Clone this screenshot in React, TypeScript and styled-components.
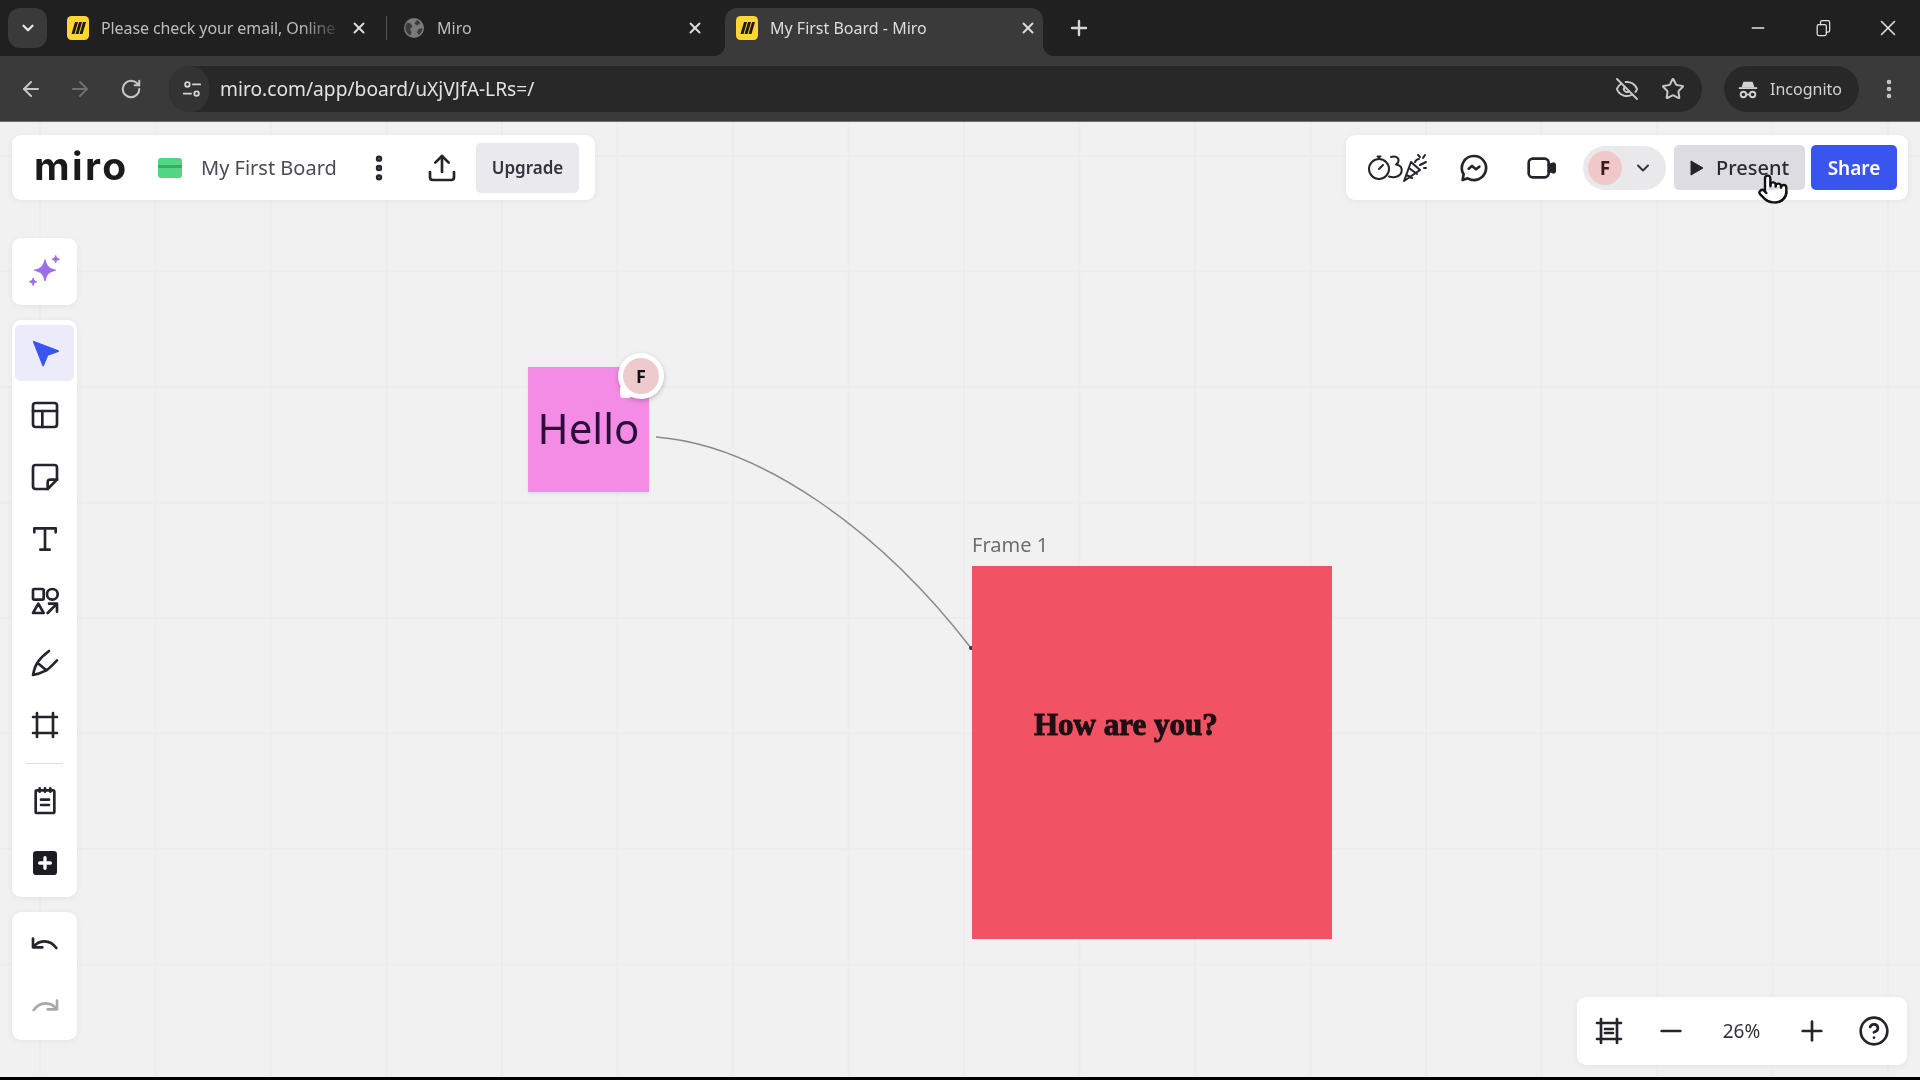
import React from "react";
import styled, { createGlobalStyle } from "styled-components";
import {
  ArrowLeft, ArrowRight, ChevronDown, CircleHelp, EllipsisVertical, EyeOff, Minus, Plus,
  Pointer, RotateCw, Star, Upload, X,
} from "lucide-react";

const Global = createGlobalStyle`
  html, body { margin: 0; padding: 0; height: 100%; overflow: hidden; background: #f1f1f1; }
  * { box-sizing: border-box; }
  #root { height: 100%; }
`;

const Page = styled.div`
  width: 1920px; height: 1080px; display: flex; flex-direction: column;
  font-family: "Noto Sans", "Open Sans", sans-serif;
  filter: blur(0.4px);
`;

/* ---------- browser chrome ---------- */
const TabStrip = styled.div`
  height: 56px; flex: none; background: #202020; display: flex; align-items: flex-end; padding-left: 8px; color: #c4c4c4;
`;
const TabSearch = styled.div`
  width: 39px; height: 40px; margin-bottom: 8px; border-radius: 12px; background: #3a3a3a; color: #e8e8e8;
  display: flex; align-items: center; justify-content: center;
`;
const Tab = styled.div<{ $active?: boolean; $left: number }>`
  position: relative; width: 318px; height: 48px; margin-left: ${(p) => p.$left}px; padding: 0 6px 8px 11px;
  display: flex; align-items: center; border-radius: 12px 12px 0 0;
  background: ${(p) => (p.$active ? "#3a3a3a" : "transparent")};
  color: ${(p) => (p.$active ? "#dedede" : "#bdbdbd")};
  ${(p) => p.$active && `
    &::before, &::after { content: ""; position: absolute; bottom: 0; width: 12px; height: 12px; }
    &::before { left: -12px; background: radial-gradient(circle at 0 0, transparent 12px, #3a3a3a 12.5px); }
    &::after { right: -12px; background: radial-gradient(circle at 100% 0, transparent 12px, #3a3a3a 12.5px); }
  `}
`;
const TabIconBox = styled.span`
  width: 22px; height: 24px; flex: none; display: flex; align-items: center; justify-content: center;
`;
const TabTitle = styled.span<{ $fade?: boolean }>`
  margin-left: 12px; width: 238px; flex: none; font-size: 16px; white-space: nowrap;
  ${(p) => p.$fade && "letter-spacing: -0.1px; mask-image: linear-gradient(to right, #000 84%, rgba(0,0,0,.2) 98%);"}
`;
const TabClose = styled.span`
  margin-left: auto; margin-right: -1px; width: 20px; height: 20px; display: flex; align-items: center; justify-content: center; color: #dcdcdc;
`;
const TabSep = styled.span`
  width: 1px; height: 24px; margin: 0 5px 16px 12px; background: #555;
`;
const NewTab = styled.span`
  width: 32px; height: 32px; margin: 0 0 12px 20px; display: flex; align-items: center; justify-content: center; color: #d6d6d6;
`;
const WindowControls = styled.div`
  margin-left: auto; height: 56px; display: flex;
`;
const WindowButton = styled.span`
  width: 65px; height: 56px; display: flex; align-items: center; justify-content: center; color: #e2e2e2;
`;
const Toolbar = styled.div`
  height: 66px; flex: none; background: #3a3a3a; display: flex; align-items: center; color: #c7c7c7; border-bottom: 1px solid #6d6d6d;
`;
const NavButton = styled.span<{ $w: number; $dim?: boolean }>`
  width: ${(p) => p.$w}px; display: flex; justify-content: center; color: ${(p) => (p.$dim ? "#6f6f6f" : "#c7c7c7")};
`;
const AddressBar = styled.div`
  margin-left: 5px; width: 1533px; height: 46px; border-radius: 23px; background: #282828; display: flex; align-items: center;
`;
const SiteChip = styled.span`
  width: 40px; height: 46px; border-radius: 23px; background: #333; display: flex; align-items: center; justify-content: center; padding-left: 6px; color: #d4d4d4;
`;
const Url = styled.span`
  margin-left: 11px; font-size: 19.2px; color: #e2e2e2; white-space: nowrap;
`;
const BarIcons = styled.span`
  margin-left: auto; display: flex; align-items: center; gap: 22px; padding-right: 17px; color: #c7c7c7;
`;
const IncognitoPill = styled.div`
  margin-left: 22px; width: 135px; height: 46px; border-radius: 23px; background: #282828; display: flex; align-items: center; padding-left: 13px; gap: 11px; color: #d2d2d2; font-size: 16px;
`;
const ToolbarKebab = styled.span`
  margin-left: 18px; display: flex; color: #c7c7c7;
`;

/* ---------- board ---------- */
const Canvas = styled.main`
  position: relative; flex: 1; overflow: hidden; background-color: #f1f1f1;
  background-image:
    linear-gradient(to right, #ededed 2px, transparent 2px),
    linear-gradient(to bottom, #ededed 2px, transparent 2px);
  background-size: 115.5px 115.5px;
  background-position: 39px 33px;
  &::after { content: ""; position: absolute; left: 0; right: 0; bottom: 0; height: 3px; background: #000; }
`;
const Sticky = styled.div`
  position: absolute; left: 528px; top: 245px; width: 121px; height: 125px; background: #f48ce6;
  box-shadow: 0 2px 3px rgba(0,0,0,.08);
  display: flex; align-items: center; justify-content: center; padding-bottom: 4px;
  font-size: 42px; color: #2c0e3d;
`;
const AvatarBubble = styled.div`
  position: absolute; left: 618px; top: 231px; width: 46px; height: 46px; border-radius: 50%; background: #fff;
  box-shadow: 0 2px 5px rgba(0,0,0,.22); display: flex; align-items: center; justify-content: center;
  &::before { content: ""; position: absolute; left: 2px; bottom: 1px; width: 12px; height: 12px; background: #fff; border-radius: 3px 0 4px 4px; }
`;
const AvatarFace = styled.span`
  position: relative; width: 36px; height: 36px; border-radius: 50%; background: #eccace; color: #111;
  display: flex; align-items: center; justify-content: center; font-size: 18px; font-weight: 700;
`;
const Connector = styled.svg`
  position: absolute; left: 0; top: 0; width: 1920px; height: 958px; pointer-events: none;
`;
const FrameLabel = styled.div`
  position: absolute; left: 972px; top: 409px; font-size: 20px; line-height: 27px; color: #6e6e6e;
`;
const Frame = styled.div`
  position: absolute; left: 972px; top: 444px; width: 360px; height: 373px; background: #f15365;
`;
const FrameText = styled.div`
  position: absolute; left: 62px; top: 137px; font-family: "Liberation Serif", serif; font-weight: 700; font-size: 31px; line-height: 44px; color: #1d1014; white-space: nowrap; -webkit-text-stroke: 1px #1d1014;
`;

const Overlay = styled.div`
  position: absolute; inset: 0; padding: 13px 12px 0 12px; display: flex; flex-direction: column; pointer-events: none;
`;
const TopRow = styled.div`
  display: flex; justify-content: space-between;
`;
const Panel = styled.div`
  background: #fff; border-radius: 9px; box-shadow: 0 1px 6px rgba(0,0,0,.06);
`;
const BoardPanel = styled(Panel)`
  width: 583px; height: 65px; display: flex; align-items: center; padding-left: 22px;
`;
const Logo = styled.span`
  width: 92px; font-family: Inter, sans-serif; font-weight: 700; font-size: 39px; line-height: 1; color: #1a1a1a; letter-spacing: 2.4px; margin-top: -5px;
`;
const BoardIcon = styled.span`
  margin-left: 32px; width: 24px; height: 20px; border-radius: 3px; background: #52d585; display: flex; flex-direction: column; justify-content: center;
  &::after { content: ""; display: block; height: 3px; background: #39ad66; margin-bottom: 3px; }
`;
const BoardName = styled.span`
  margin-left: 19px; width: 136px; font-size: 20px; color: #4a4a55; white-space: nowrap;
`;
const IconButton = styled.span<{ $w?: number; $ml?: number }>`
  width: ${(p) => p.$w ?? 40}px; margin-left: ${(p) => p.$ml ?? 0}px; flex: none; display: flex; align-items: center; justify-content: center; color: #24242c;
`;
const Upgrade = styled.span`
  margin-left: 14px; width: 103px; height: 50px; border-radius: 5px; background: #e9e9ee; color: #33333f; font-size: 17px; font-weight: 600; padding-bottom: 1px;
  display: flex; align-items: center; justify-content: center;
`;
const ActionsPanel = styled(Panel)`
  width: 562px; height: 65px; display: flex; align-items: center; padding-left: 22px;
`;
const AvatarPill = styled.div`
  margin-left: 25px; width: 83px; height: 44px; border-radius: 22px; background: #e9e9ec; display: flex; align-items: center; padding-left: 5px; color: #33333f;
`;
const PillFace = styled.span`
  width: 34px; height: 34px; border-radius: 50%; background: #f0c8ca; color: #3c1b20; font-size: 19px; font-weight: 700;
  display: flex; align-items: center; justify-content: center; margin-right: 11px;
`;
const Present = styled.div`
  margin-left: 8px; width: 131px; height: 45px; border-radius: 5px; background: #dcdce2; color: #2a2a33; font-size: 20px; font-weight: 500;
  display: flex; align-items: center; padding-left: 16px; gap: 12px;
`;
const Share = styled.div`
  margin-left: 6px; width: 86px; height: 45px; border-radius: 5px; background: #3a55ee; color: #fff; font-size: 19px; font-weight: 600;
  display: flex; align-items: center; justify-content: center;
`;
const Cursor = styled.span`
  position: absolute; left: 1757px; top: 51px; display: flex; color: #111;
`;
const Rail = styled.div`
  margin-top: 38px; width: 65px; display: flex; flex-direction: column; gap: 15px;
`;
const MagicPanel = styled(Panel)`
  height: 67px; display: flex; align-items: center; justify-content: center;
`;
const ToolsPanel = styled(Panel)`
  padding: 5px 3px 6px; display: flex; flex-direction: column; gap: 6px;
`;
const HistoryPanel = styled(Panel)`
  padding: 4px 3px 6px; display: flex; flex-direction: column; gap: 6px;
`;
const Tool = styled.span<{ $active?: boolean; $muted?: boolean }>`
  height: 56px; border-radius: 5px; display: flex; align-items: center; justify-content: center;
  background: ${(p) => (p.$active ? "#ebebfa" : "transparent")};
  color: ${(p) => (p.$muted ? "#a9a9a9" : "#24242c")};
`;
const RailDivider = styled.span`
  height: 1px; margin: 3.5px 11px; background: #dedee2;
`;
const ZoomPanel = styled(Panel)`
  position: absolute; right: 13px; bottom: 15px; width: 330px; height: 68px; padding-left: 1px; display: flex; align-items: center;
`;
const ZoomValue = styled.span`
  width: 79px; text-align: center; font-size: 19px; color: #33333b;
`;

/* ---------- drawn icons ---------- */
const Stroke = styled.svg.attrs({ fill: "none", stroke: "currentColor", strokeLinecap: "round", strokeLinejoin: "round" })``;

const I = ({ children, size = 32, sw = 2 }: { children: React.ReactNode; size?: number; sw?: number }) => (
  <Stroke width={size} height={size} viewBox="0 0 24 24" strokeWidth={sw}>{children}</Stroke>
);

const MiroFavicon = () => (
  <svg width="22" height="24" viewBox="0 0 22 24">
    <rect x="0" y="0" width="22" height="24" rx="4.5" fill="#ffd633" />
    <path d="M8 6h3L7.5 18H4.5zM12 6h3l-3.5 12H8.5zM16 6h3l-3.5 12h-3z" fill="#1e1a10" />
  </svg>
);
const GlobeIcon = () => (
  <svg width="20" height="20" viewBox="0 0 20 20">
    <circle cx="10" cy="10" r="10" fill="#7b7b7b" />
    <path d="M3 4.5l3.5 1 2 3-2.5 2.5 1.5 3-1 3.5C3 16 .8 12 1.5 8zM13 2c2 .8 3 2 3 3.5l-3 2-2.5-2zM18.5 10c0 3-2 6-4 7l-1.5-3 1.5-3z" fill="#3b3b3b" />
  </svg>
);
const RestoreIcon = () => (
  <I size={20} sw={1.5}><rect x="5" y="8" width="11" height="13" rx="2" /><path d="M9 8V5a2 2 0 0 1 2-2h7a2 2 0 0 1 2 2v10a2 2 0 0 1-2 2h-2" /></I>
);
const TuneIcon = () => (
  <I size={22} sw={2}><circle cx="7" cy="7" r="2.5" /><path d="M13 7h8M3 17h8" /><circle cx="17" cy="17" r="2.5" /></I>
);
const IncognitoIcon = () => (
  <svg width="22" height="22" viewBox="0 0 24 24" fill="none" stroke="currentColor" strokeWidth="2">
    <path d="M7 4h10l2 6H5z" fill="currentColor" stroke="none" />
    <path d="M2 11h20" />
    <circle cx="7" cy="18" r="3" /><circle cx="17" cy="18" r="3" /><path d="M10 18h4" />
  </svg>
);
const Sparkles = () => (
  <svg width="38" height="38" viewBox="0 0 32 32" fill="#9a6fe9" stroke="#9a6fe9" strokeWidth="0.8" strokeLinejoin="round">
    <path d="M16 5.500c1.500 5.800 3.200 7.500 9 9-5.800 1.500-7.500 3.200-9 9-1.500-5.800-3.200-7.500-9-9 5.800-1.500 7.500-3.200 9-9z" />
    <path d="M25 2c.5 2 1.200 2.700 3.200 3.200-2 .5-2.700 1.200-3.200 3.200-.5-2-1.200-2.700-3.200-3.200C23.800 4.700 24.500 4 25 2z" />
    <path d="M6 21c.5 2 1.200 2.700 3.200 3.200-2 .5-2.700 1.200-3.200 3.200-.5-2-1.200-2.700-3.200-3.200 2-.5 2.700-1.200 3.200-3.200z" />
  </svg>
);
const SelectIcon = () => (
  <svg width="30" height="30" viewBox="0 0 24 24" fill="#3a55f2" stroke="#3a55f2" strokeWidth="1.4" strokeLinejoin="round">
    <path d="M3 3l19.500 7.500-8.500 3-3.500 8.500z" />
  </svg>
);
const LayoutIcon = () => <I><rect x="3" y="3" width="18" height="18" rx="2" /><path d="M3 9h18M10 9v12" /></I>;
const StickyIcon = () => <I><path d="M5 3h14a2 2 0 0 1 2 2v9l-7 7H5a2 2 0 0 1-2-2V5a2 2 0 0 1 2-2z" /><path d="M21 14h-5a2 2 0 0 0-2 2v5" /></I>;
const TextIcon = () => <I><path d="M4 7V4h16v3M12 4v16M8.500 20h7" /></I>;
const ShapesIcon = () => <I><rect x="3" y="3" width="8" height="8" rx="1" /><circle cx="17.500" cy="7" r="4" /><path d="M7 14l4 7H3zM14 21l7-7M15 14h6v6" /></I>;
const PenIcon = () => <I><path d="M3 21c.8-4 2-7.500 3.500-9.500C8.500 8.500 11 6 15 3M3 21c3.500-.6 7-2 10-3.500 3-2 5-4.500 8-7.500M6.500 12l6.500 5.500" /></I>;
const FrameIcon = () => <I><path d="M6 3v18M18 3v18M3 6h18M3 18h18" /></I>;
const NotesIcon = () => <I><rect x="5" y="4" width="14" height="17" rx="1" /><path d="M8 2.500V5M12 2.500V5M16 2.500V5M9 11h6M9 15h6" /></I>;
const AddIcon = () => (
  <svg width="32" height="32" viewBox="0 0 24 24"><rect x="3" y="3" width="18" height="18" rx="2.500" fill="#1c1c22" /><path d="M12 8v8M8 12h8" stroke="#fff" strokeWidth="2.500" strokeLinecap="round" /></svg>
);
const UndoIcon = () => <I><path d="M3 8v6.500h7M3.500 14C7 9.500 15 7.500 20.500 15" /></I>;
const RedoIcon = () => <I><path d="M21 8v6.500h-7M20.500 14C17 9.500 9 7.500 3.500 15" /></I>;
const FitIcon = () => <I><path d="M6 3v18M18 3v18M3 6h18M3 18h18M9 10.500h6M9 13.500h6" /></I>;
const ReactionsIcon = () => (
  <Stroke width="60" height="30" viewBox="0 0 60 30" strokeWidth="2">
    <circle cx="11" cy="16" r="10" /><path d="M11 6V3.500M9.500 3.500h3M11 16l4-4" />
    <path d="M23 4c4.500-1.500 8 .5 7.500 4-.2 1.500-1 2.500-2.500 3.500 4.500.5 6.500 3.500 5.500 7.500-1 4-6.500 6.500-12.500 4.500" />
    <path d="M36 28l7-19 9 8zM38.500 22l5.500 3M41 15l8 6" />
    <path d="M47 9c1-2 2-3 4-3M52 12l6-3M50 2l2 2M57 2l-2 3M58 15h-2" />
  </Stroke>
);
const ChatIcon = () => (
  <I><path d="M12 3a9 9 0 1 1-4.600 16.700L3.500 21l.7-4.300A9 9 0 0 1 12 3z" /><path d="M8 12.500l2.500-2 3 2.500 2.500-2" /></I>
);
const VideoIcon = () => <I><rect x="2" y="5" width="15" height="14" rx="3" /><path d="M17 10l3.500-1.200a.8.8 0 0 1 1 .8v4.800a.8.8 0 0 1-1 .8L17 14" fill="currentColor" /></I>;
const PlayIcon = () => (
  <svg width="14" height="16" viewBox="0 0 14 16"><path d="M1 1l12 7-12 7z" fill="#24242c" stroke="#24242c" strokeLinejoin="round" /></svg>
);

export default function App() {
  return (
    <Page>
      <Global />
      <TabStrip>
        <TabSearch><ChevronDown size={18} strokeWidth={3} /></TabSearch>
        <Tab $left={9}>
          <TabIconBox><MiroFavicon /></TabIconBox>
          <TabTitle $fade>Please check your email, Online</TabTitle>
          <TabClose><X size={18} strokeWidth={2.6} /></TabClose>
        </Tab>
        <TabSep />
        <Tab $left={0}>
          <TabIconBox><GlobeIcon /></TabIconBox>
          <TabTitle>Miro</TabTitle>
          <TabClose><X size={18} strokeWidth={2.6} /></TabClose>
        </Tab>
        <Tab $left={15} $active>
          <TabIconBox><MiroFavicon /></TabIconBox>
          <TabTitle>My First Board - Miro</TabTitle>
          <TabClose><X size={18} strokeWidth={2.6} /></TabClose>
        </Tab>
        <NewTab><Plus size={24} strokeWidth={2.4} /></NewTab>
        <WindowControls>
          <WindowButton><Minus size={20} strokeWidth={1.6} /></WindowButton>
          <WindowButton><RestoreIcon /></WindowButton>
          <WindowButton><X size={26} strokeWidth={1.5} /></WindowButton>
        </WindowControls>
      </TabStrip>
      <Toolbar>
        <NavButton $w={62}><ArrowLeft size={24} strokeWidth={2} /></NavButton>
        <NavButton $w={36} $dim><ArrowRight size={24} strokeWidth={2} /></NavButton>
        <NavButton $w={66}><RotateCw size={22} strokeWidth={2.2} /></NavButton>
        <AddressBar>
          <SiteChip><TuneIcon /></SiteChip>
          <Url>miro.com/app/board/uXjVJfA-LRs=/</Url>
          <BarIcons><EyeOff size={24} strokeWidth={2} /><Star size={24} strokeWidth={2} /></BarIcons>
        </AddressBar>
        <IncognitoPill><IncognitoIcon />Incognito</IncognitoPill>
        <ToolbarKebab><EllipsisVertical size={24} strokeWidth={2.6} /></ToolbarKebab>
      </Toolbar>
      <Canvas>
        <Sticky>Hello</Sticky>
        <AvatarBubble><AvatarFace>F</AvatarFace></AvatarBubble>
        <Connector viewBox="0 0 1920 958" fill="none">
          <path d="M656 315C760 323 880 408 971 526" stroke="#8a8a8a" strokeWidth="1.500" />
          <circle cx="971" cy="526" r="2" fill="#333" />
        </Connector>
        <FrameLabel>Frame 1</FrameLabel>
        <Frame><FrameText>How are you?</FrameText></Frame>
        <Overlay>
          <TopRow>
            <BoardPanel>
              <Logo>miro</Logo>
              <BoardIcon />
              <BoardName>My First Board</BoardName>
              <IconButton $ml={22}><EllipsisVertical size={32} strokeWidth={2.8} /></IconButton>
              <IconButton $ml={23}><Upload size={32} strokeWidth={2} /></IconButton>
              <Upgrade>Upgrade</Upgrade>
            </BoardPanel>
            <ActionsPanel>
              <IconButton $w={60}><ReactionsIcon /></IconButton>
              <IconButton $w={32} $ml={30}><ChatIcon /></IconButton>
              <IconButton $w={32} $ml={36}><VideoIcon /></IconButton>
              <AvatarPill><PillFace>F</PillFace><ChevronDown size={20} strokeWidth={2.4} /></AvatarPill>
              <Present><PlayIcon />Present</Present>
              <Share>Share</Share>
            </ActionsPanel>
          </TopRow>
          <Rail>
            <MagicPanel><Sparkles /></MagicPanel>
            <ToolsPanel>
              <Tool $active><SelectIcon /></Tool>
              <Tool><LayoutIcon /></Tool>
              <Tool><StickyIcon /></Tool>
              <Tool><TextIcon /></Tool>
              <Tool><ShapesIcon /></Tool>
              <Tool><PenIcon /></Tool>
              <Tool><FrameIcon /></Tool>
              <RailDivider />
              <Tool><NotesIcon /></Tool>
              <Tool><AddIcon /></Tool>
            </ToolsPanel>
            <HistoryPanel>
              <Tool><UndoIcon /></Tool>
              <Tool $muted><RedoIcon /></Tool>
            </HistoryPanel>
          </Rail>
        </Overlay>
        <ZoomPanel>
          <IconButton $w={62}><FitIcon /></IconButton>
          <IconButton $w={62}><Minus size={32} strokeWidth={2} /></IconButton>
          <ZoomValue>26%</ZoomValue>
          <IconButton $w={62}><Plus size={32} strokeWidth={2} /></IconButton>
          <IconButton $w={62}><CircleHelp size={32} strokeWidth={2} /></IconButton>
        </ZoomPanel>
        <Cursor><Pointer size={32} strokeWidth={1.8} fill="#fff" /></Cursor>
      </Canvas>
    </Page>
  );
}
